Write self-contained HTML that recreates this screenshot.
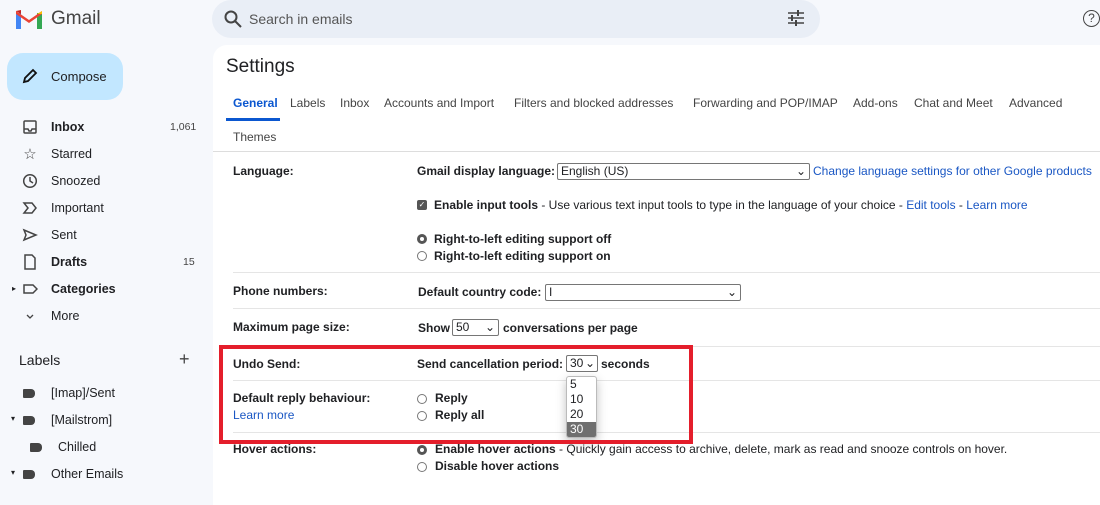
<!DOCTYPE html>
<html><head><style>
*{box-sizing:border-box;margin:0;padding:0}
body{width:1100px;height:483px;overflow:hidden;background:#f6f8fc;font-family:"Liberation Sans",Arial,sans-serif;color:#202124;position:relative}
.a{position:absolute;white-space:nowrap}
.nav{font-size:12.5px;color:#202124}
.b{font-weight:bold}
.main{position:absolute;left:213px;top:45px;width:900px;height:460px;background:#fff;border-radius:14px 0 0 0}
.s{font-size:12px}
.hr{position:absolute;left:233px;width:870px;height:1px;background:#e5e5e5}
.lnk{color:#1a57c4}
.rad{position:absolute;width:10px;height:10px;border:1px solid #777;border-radius:50%;background:#fff}
.sel{position:absolute;border:1px solid #767676;border-radius:2px;background:#fff;font-size:12px;padding-left:3px;height:17px;line-height:15px}
.tag{position:absolute;width:12px;height:9px;background:#444;border-radius:1px 4px 4px 1px}
.ic{position:absolute;left:22px;font-size:13px;color:#444;width:16px;text-align:center}
</style></head><body>
<svg class="a" style="left:16px;top:10px" width="26" height="19" viewBox="0 0 26 19"><rect x="0" y="3" width="5" height="16" fill="#4285f4"/><rect x="21" y="3" width="5" height="16" fill="#34a853"/><path d="M0 4l13 9 13-9V1L13 10 0 1z" fill="#ea4335"/><path d="M21 4l5-3v3z" fill="#fbbc04"/><path d="M0 1l5 3V0z" fill="#c5221f"/></svg>
<div class="a" style="left:51px;top:8px;font-size:19px;color:#444">Gmail</div>
<div class="a" style="left:212px;top:0;width:608px;height:38px;background:#e9eef6;border-radius:20px"></div>
<svg class="a" style="left:224px;top:10px" width="18" height="18" viewBox="0 0 18 18"><circle cx="7" cy="7" r="5.5" fill="none" stroke="#444" stroke-width="2"/><path d="M11 11l6 6" stroke="#444" stroke-width="2"/></svg>
<div class="a" style="left:249px;top:11px;font-size:14px;color:#555">Search in emails</div>
<svg class="a" style="left:787px;top:10px" width="18" height="16"><path d="M1 3h16M1 8h16M1 13h16" stroke="#444" stroke-width="1.6"/><rect x="10" y="0" width="2" height="6" fill="#444"/><rect x="4" y="5" width="2" height="6" fill="#444"/><rect x="8" y="10" width="2" height="6" fill="#444"/></svg>
<div class="a" style="left:1083px;top:10px;width:17px;height:17px;border:1.6px solid #444;border-radius:50%;font-size:12px;text-align:center;line-height:14px;color:#444">?</div>
<div class="a" style="left:7px;top:53px;width:116px;height:47px;background:#c2e7ff;border-radius:16px"></div>
<svg class="a" style="left:22px;top:68px" width="16" height="16"><path d="M2 14l1-4 8-8 3 3-8 8z" fill="none" stroke="#111" stroke-width="1.8"/></svg>
<div class="a nav" style="left:51px;top:69px;font-size:13px">Compose</div>
<div class="a nav b" style="left:51px;top:120px">Inbox</div><div class="a" style="left:170px;top:121px;font-size:10.5px;color:#444">1,061</div>
<div class="a nav" style="left:51px;top:147px">Starred</div>
<div class="a nav" style="left:51px;top:174px">Snoozed</div>
<div class="a nav" style="left:51px;top:201px">Important</div>
<div class="a nav" style="left:51px;top:228px">Sent</div>
<div class="a nav b" style="left:51px;top:255px">Drafts</div><div class="a" style="left:183px;top:256px;font-size:10.5px;color:#444">15</div>
<div class="a nav b" style="left:51px;top:282px">Categories</div>
<div class="a nav" style="left:51px;top:309px">More</div>
<svg class="a" style="left:22px;top:119px" width="16" height="16"><rect x="2" y="2" width="12" height="12" rx="1" fill="none" stroke="#444" stroke-width="1.5"/><path d="M2 10h4l1 2h2l1-2h4" fill="none" stroke="#444" stroke-width="1.5"/></svg>
<div class="ic" style="top:145px;font-size:15px">☆</div>
<svg class="a" style="left:22px;top:173px" width="16" height="16"><circle cx="8" cy="8" r="6.3" fill="none" stroke="#444" stroke-width="1.5"/><path d="M8 4v4l3 2" fill="none" stroke="#444" stroke-width="1.5"/></svg>
<svg class="a" style="left:22px;top:200px" width="16" height="16"><path d="M2 3h8l4 5-4 5H2l4-5z" fill="none" stroke="#444" stroke-width="1.5"/></svg>
<svg class="a" style="left:22px;top:227px" width="16" height="16"><path d="M2 3l12 5-12 5 2-5z" fill="none" stroke="#444" stroke-width="1.5"/></svg>
<svg class="a" style="left:22px;top:254px" width="16" height="16"><path d="M3 1h7l3 3v11H3z" fill="none" stroke="#444" stroke-width="1.5"/></svg>
<svg class="a" style="left:22px;top:281px" width="16" height="16"><path d="M2 4h9l4 4-4 4H2z" fill="none" stroke="#444" stroke-width="1.5"/></svg>
<svg class="a" style="left:22px;top:308px" width="16" height="16"><path d="M5 7l3 3 3-3" fill="none" stroke="#444" stroke-width="1.3"/></svg>
<div class="a" style="left:19px;top:352px;font-size:14px">Labels</div>
<div class="a" style="left:179px;top:349px;font-size:18px;color:#444">+</div>
<div class="tag" style="left:23px;top:389px"></div><div class="a nav" style="left:51px;top:386px">[Imap]/Sent</div>
<div class="tag" style="left:23px;top:416px"></div><div class="a nav" style="left:51px;top:413px">[Mailstrom]</div>
<div class="tag" style="left:30px;top:443px"></div><div class="a nav" style="left:58px;top:440px">Chilled</div>
<div class="tag" style="left:23px;top:470px"></div><div class="a nav" style="left:51px;top:467px">Other Emails</div>
<div class="a" style="left:11px;top:414px;font-size:8px">▾</div><div class="a" style="left:11px;top:468px;font-size:8px">▾</div><div class="a" style="left:12px;top:284px;font-size:8px">▸</div>
<div class="main"></div>
<div class="a" style="left:226px;top:56px;font-size:19px">Settings</div>
<div class="a s" style="left:233px;top:96px;color:#0b57d0;font-weight:bold">General</div>
<div class="a" style="left:226px;top:118px;width:54px;height:3px;background:#0b57d0"></div>
<div class="a s" style="left:290px;top:96px;color:#444">Labels</div>
<div class="a s" style="left:340px;top:96px;color:#444">Inbox</div>
<div class="a s" style="left:384px;top:96px;color:#444">Accounts and Import</div>
<div class="a s" style="left:514px;top:96px;color:#444">Filters and blocked addresses</div>
<div class="a s" style="left:693px;top:96px;color:#444">Forwarding and POP/IMAP</div>
<div class="a s" style="left:853px;top:96px;color:#444">Add-ons</div>
<div class="a s" style="left:914px;top:96px;color:#444">Chat and Meet</div>
<div class="a s" style="left:1009px;top:96px;color:#444">Advanced</div>
<div class="a s" style="left:233px;top:130px;color:#444">Themes</div>
<div class="a" style="left:213px;top:151px;width:900px;height:1px;background:#ddd"></div>
<div class="a s b" style="left:233px;top:164px">Language:</div>
<div class="a s b" style="left:417px;top:164px">Gmail display language:</div>
<div class="sel" style="left:557px;top:163px;width:253px">English (US)<span style="position:absolute;right:3px">⌄</span></div>
<div class="a s lnk" style="left:813px;top:164px">Change language settings for other Google products</div>
<div class="a" style="left:417px;top:200px;width:10px;height:10px;background:#555;border-radius:2px;color:#fff;font-size:8px;line-height:10px;text-align:center">✓</div>
<div class="a s" style="left:434px;top:198px"><b>Enable input tools</b> - Use various text input tools to type in the language of your choice - <span class="lnk">Edit tools</span> - <span class="lnk">Learn more</span></div>
<div class="rad" style="left:417px;top:234px;border-width:3px;border-color:#555"></div><div class="a s b" style="left:434px;top:232px">Right-to-left editing support off</div>
<div class="rad" style="left:417px;top:251px"></div><div class="a s b" style="left:434px;top:249px">Right-to-left editing support on</div>
<div class="hr" style="top:272px"></div>
<div class="a s b" style="left:233px;top:284px">Phone numbers:</div>
<div class="a s b" style="left:418px;top:285px">Default country code:</div>
<div class="sel" style="left:545px;top:284px;width:196px">I<span style="position:absolute;right:3px">⌄</span></div>
<div class="hr" style="top:308px"></div>
<div class="a s b" style="left:233px;top:320px">Maximum page size:</div>
<div class="a s b" style="left:418px;top:321px">Show</div>
<div class="sel" style="left:452px;top:319px;width:47px">50<span style="position:absolute;right:3px">⌄</span></div>
<div class="a s b" style="left:503px;top:321px">conversations per page</div>
<div class="hr" style="top:346px"></div>
<div class="a s b" style="left:233px;top:357px">Undo Send:</div>
<div class="a s b" style="left:417px;top:357px">Send cancellation period:</div>
<div class="sel" style="left:566px;top:355px;width:32px">30<span style="position:absolute;right:2px">⌄</span></div>
<div class="a s b" style="left:601px;top:357px">seconds</div>
<div class="hr" style="top:380px"></div>
<div class="a s b" style="left:233px;top:391px">Default reply behaviour:</div>
<div class="a s lnk" style="left:233px;top:408px">Learn more</div>
<div class="rad" style="left:417px;top:394px"></div><div class="a s b" style="left:435px;top:391px">Reply</div>
<div class="rad" style="left:417px;top:411px"></div><div class="a s b" style="left:435px;top:408px">Reply all</div>
<div class="hr" style="top:432px"></div>
<div class="a" style="left:566px;top:376px;width:31px;height:62px;background:#fff;border:1px solid #bbb;border-radius:3px;font-size:12px;line-height:15px;overflow:hidden;box-shadow:0 4px 10px rgba(0,0,0,.25)"><div style="padding-left:3px">5</div><div style="padding-left:3px">10</div><div style="padding-left:3px">20</div><div style="padding-left:3px;background:#6f6f6f;color:#fff">30</div></div>
<div class="a" style="left:219px;top:345px;width:474px;height:99px;border:4px solid #e41e2b"></div>
<div class="a s b" style="left:233px;top:442px">Hover actions:</div>
<div class="rad" style="left:417px;top:445px;border-width:3px;border-color:#555"></div><div class="a s" style="left:435px;top:442px"><b>Enable hover actions</b> - Quickly gain access to archive, delete, mark as read and snooze controls on hover.</div>
<div class="rad" style="left:417px;top:462px"></div><div class="a s b" style="left:435px;top:459px">Disable hover actions</div>
</body></html>
